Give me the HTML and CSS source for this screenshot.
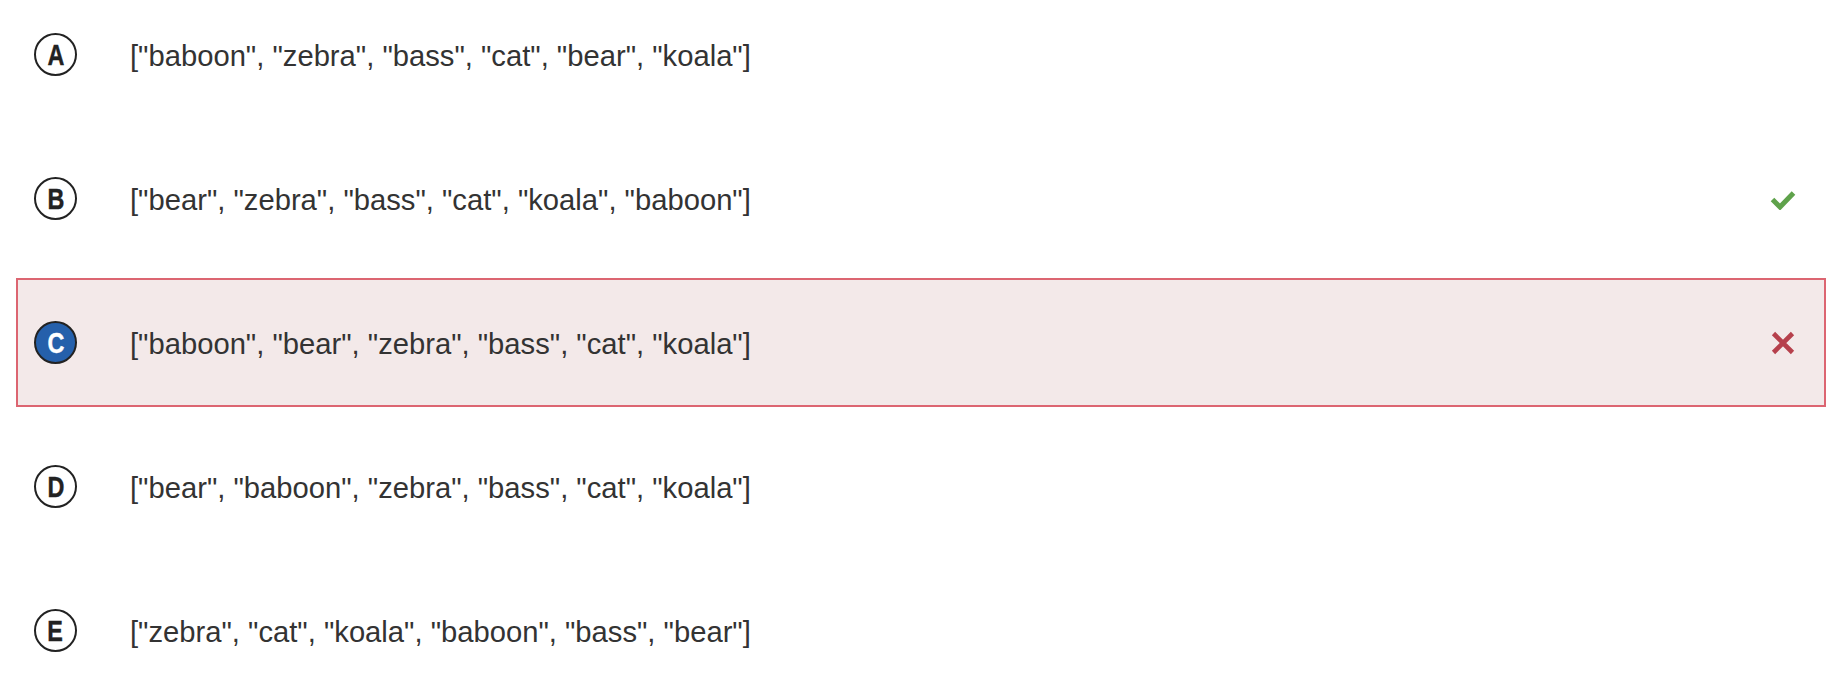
FILE: index.html
```html
<!DOCTYPE html>
<html>
<head>
<meta charset="utf-8">
<link rel="stylesheet" href="styles.css">
</head>
<body>
<ul class="options">
  <li class="option">
    <span class="badge"><span class="letter">A</span></span>
    <span class="text">["baboon", "zebra", "bass", "cat", "bear", "koala"]</span>
  </li>
  <li class="option">
    <span class="badge"><span class="letter">B</span></span>
    <span class="text">["bear", "zebra", "bass", "cat", "koala", "baboon"]</span>
    <svg class="mark" width="26" height="22" viewBox="0 0 26 22"><path d="M2.5 11.5 L10 19 L23.5 5" fill="none" stroke="#5fa24b" stroke-width="5" stroke-linejoin="miter"/></svg>
  </li>
  <li class="option wrong">
    <span class="badge selected"><span class="letter">C</span></span>
    <span class="text">["baboon", "bear", "zebra", "bass", "cat", "koala"]</span>
    <svg class="mark" width="26" height="24" viewBox="0 0 26 24"><path d="M3.5 2.5 L22.5 21.5 M22.5 2.5 L3.5 21.5" fill="none" stroke="#b6404c" stroke-width="4.6"/></svg>
  </li>
  <li class="option">
    <span class="badge"><span class="letter">D</span></span>
    <span class="text">["bear", "baboon", "zebra", "bass", "cat", "koala"]</span>
  </li>
  <li class="option">
    <span class="badge"><span class="letter">E</span></span>
    <span class="text">["zebra", "cat", "koala", "baboon", "bass", "bear"]</span>
  </li>
</ul>
</body>
</html>
```

FILE: styles.css
```css
html, body {
  margin: 0;
  padding: 0;
  background: #ffffff;
}

.options {
  list-style: none;
  margin: -10px 0 0 0;
  padding: 0 20px 0 16px;
  display: flex;
  flex-direction: column;
  gap: 15px;
}

.option {
  height: 129px;
  box-sizing: border-box;
  border: 2px solid transparent;
  display: flex;
  align-items: center;
  padding: 0 28px 0 16px;
  font-family: "Liberation Sans", Arial, sans-serif;
  font-size: 29.2px;
  color: #333333;
}

.option.wrong {
  background: #f3e9e9;
  border-color: #dc6571;
}

.badge {
  width: 43px;
  height: 43px;
  box-sizing: border-box;
  border: 2px solid #222222;
  border-radius: 50%;
  display: flex;
  align-items: center;
  justify-content: center;
  font-family: "Liberation Sans", Arial, sans-serif;
  font-weight: bold;
  font-size: 30px;
  line-height: 1;
  color: #222222;
  flex: none;
}

.letter {
  display: block;
  transform: scaleX(0.78);
  margin-top: 1px;
  -webkit-text-stroke: 0.4px currentColor;
}

.badge.selected {
  background: #2560ab;
  color: #ffffff;
}

.text {
  margin-left: 53px;
  padding-top: 3px;
  flex: 1;
  white-space: nowrap;
}

.mark {
  flex: none;
  display: block;
}
```
